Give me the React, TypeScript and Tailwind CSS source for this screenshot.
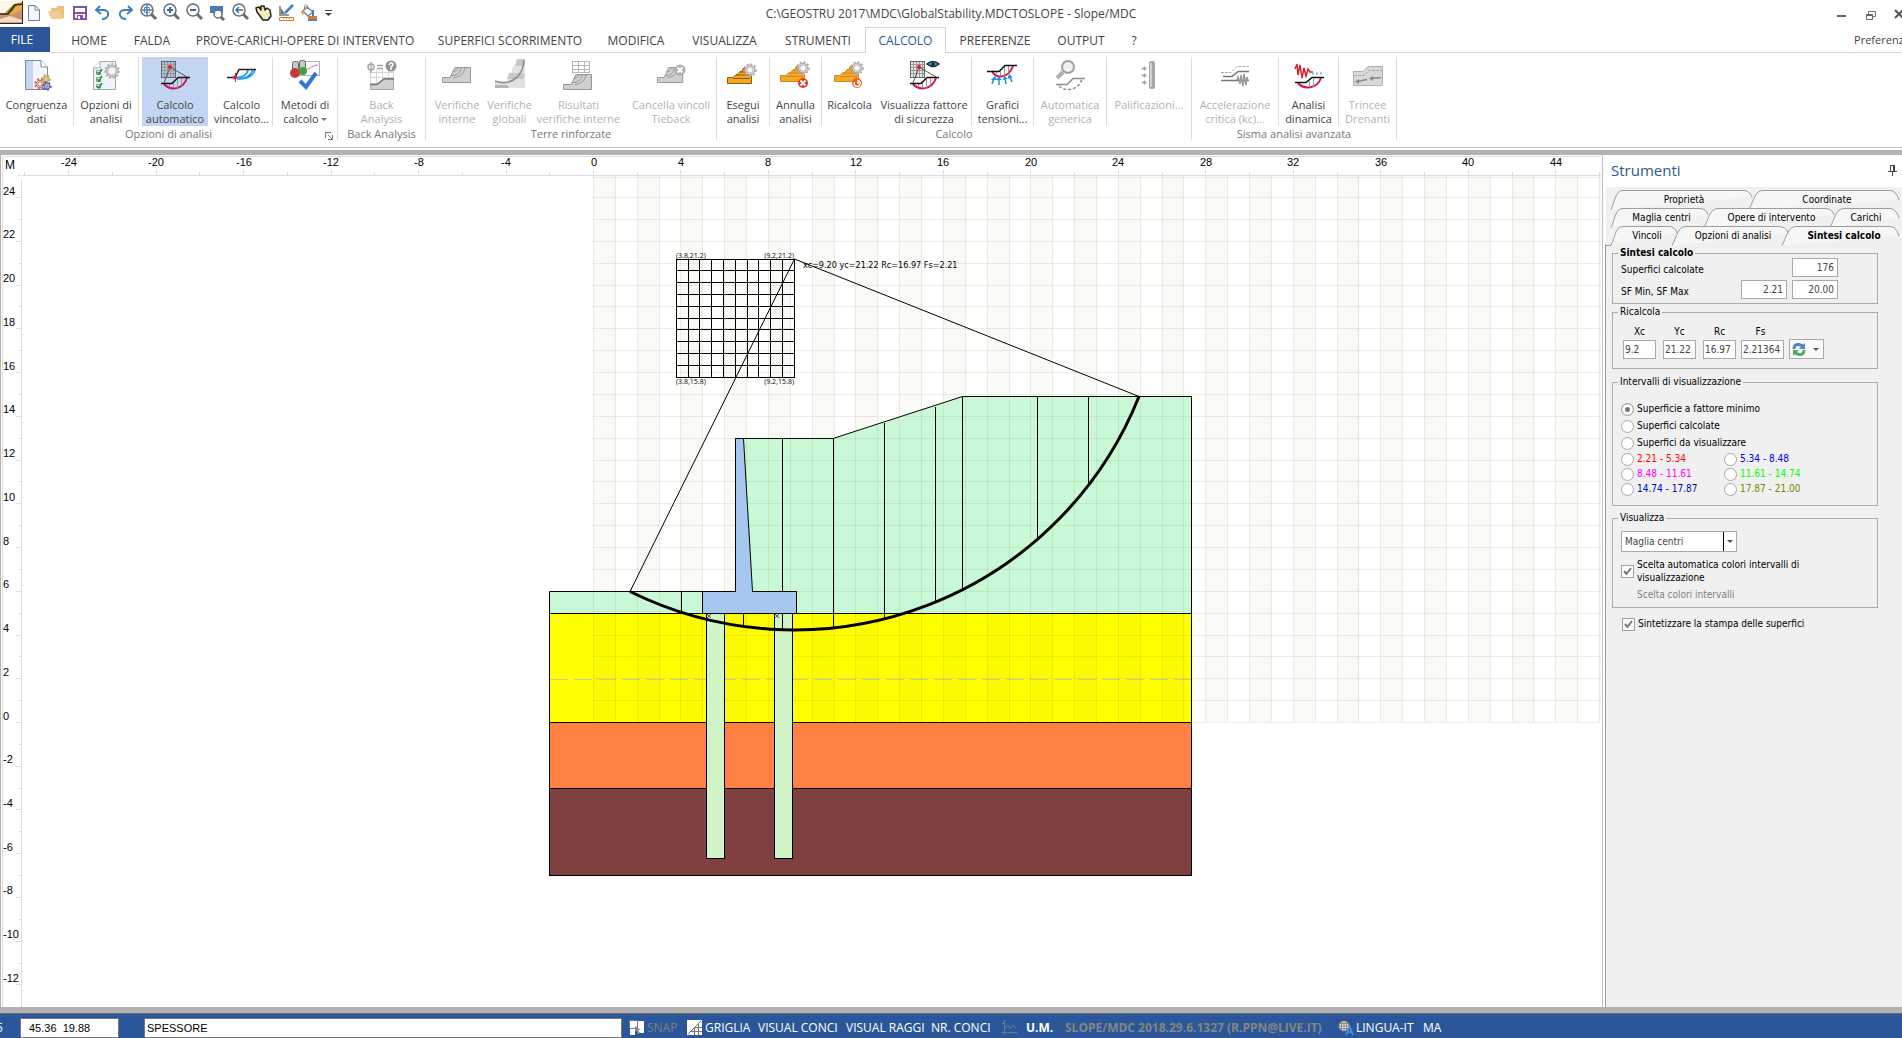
import React, { useState } from 'react';
import clsx from 'clsx';

/* ---------- ribbon icons ---------- */

const Hill = ({ x = 0, y = 0, fill = '#cfcfcf', stroke = '#969696' }) => (
  <g transform={`translate(${x} ${y})`} fill={fill} stroke={stroke}>
    <path d="M0.5 15.5V10.5H8L13 0.5H28.5V15.5Z" />
    <path d="M9 8.5C15 9 18 6 19 1M12 10.5C19 10 22 6 23 1M11 4.5C13 4.500 15 3 16 1" fill="none" />
  </g>
);

const Terraces = ({ y = 0, fill = '#f5a623', stroke = '#8a5a0a' }) => (
  <g transform={`translate(0 ${y})`} fill={fill} stroke={stroke}>
    <path d="M0.500 15.500V9.500H6L9 6.500H11L13 3.500H15L16 0.500H20L24.500 8.500V15.500Z" />
    <path d="M6 10.500H23M9 7H22M13 4H21" fill="none" />
  </g>
);

const Gear = ({ cx = 0, cy = 0, r = 5, color = '#a6a6a6' }) => (
  <g stroke={color}>
    <circle cx={cx} cy={cy} r={r + 2} fill="none" strokeWidth="1.500" strokeDasharray="2 2" />
    <circle cx={cx} cy={cy} r={r} fill="#f6f6f6" strokeWidth="2.500" />
    <circle cx={cx} cy={cy} r={r} fill="none" stroke="#d6d6d6" strokeWidth="1" />
  </g>
);

const CentreGrid = ({ bg = '#ffffff' }) => (
  <g>
    <rect x="2.500" y="2.500" width="14" height="16" fill={bg} stroke="#666" />
    <path d="M5.500 3V18M8.500 3V18M11.500 3V18M14.500 3V18M3 5.500H16M3 8.500H16M3 11.500H16M3 14.500H16" stroke="#999" />
  </g>
);

const SlipCircle = () => (
  <g fill="none">
    <path d="M5 24L11 8L28 18" stroke="#555" />
    <path d="M5 25C11 32 24 31 28 19" stroke="#d4145a" strokeWidth="2" />
    <path d="M10.500 25V28M14.500 22V29M18.500 20V29M22.500 19V27" stroke="#999" />
    <path d="M2 24.500H13L19 18.500H31" stroke="#111" strokeWidth="1.500" />
    <circle cx="11" cy="8" r="2" fill="#e8112d" />
  </g>
);

const Svg = ({ children }: { children: React.ReactNode }) => (
  <svg width="32" height="32" viewBox="0 0 32 32" className="shrink-0" aria-hidden="true">
    {children}
  </svg>
);

const icons: Record<string, React.ReactNode> = {
  check: (
    <Svg>
      <path d="M5.500 1.500H21L27.500 8V30.500H5.500Z" fill="#f2f6fc" stroke="#7c8a9c" />
      <path d="M6 2H13V30H6Z" fill="#c3d6f0" />
      <path d="M21 1.500V8H27.500" fill="#fff" stroke="#7c8a9c" />
      <Gear cx={20} cy={25} r={3} color="#c85a5a" />
      <Gear cx={26} cy={20} r={2} color="#c9a227" />
      <Gear cx={27} cy={27} r={2} color="#4a5fb5" />
    </Svg>
  ),
  options: (
    <Svg>
      <path d="M10 2.500H25.500V30.500H3.500V9Z" fill="#eff3f6" stroke="#9fa9b2" />
      <path d="M10 2.500V9H3.500" fill="#fff" stroke="#9fa9b2" />
      <path d="M6.500 11.500H10.500V15.500H6.500ZM6.500 18.500H10.500V22.500H6.500ZM6.500 25.500H10.500V28.500H6.500Z" fill="#fff" stroke="#8aa08f" />
      <path d="M7 13L9 15L12 10M7 20L9 22L12 17M7 27L9 29L12 24" fill="none" stroke="#169245" strokeWidth="1.500" />
      <Gear cx={22} cy={12} r={5} />
    </Svg>
  ),
  auto: (
    <Svg>
      <CentreGrid bg="#b0bfdc" />
      <SlipCircle />
    </Svg>
  ),
  linked: (
    <Svg>
      <path d="M10 18C16 19 21 16 22 11M11 20C20 20 25 16 27 11M15 20C24 19 28 15 29 11" fill="none" stroke="#1b9de2" strokeWidth="1.500" />
      <path d="M1 18.500H9L13 10.500H30" fill="none" stroke="#222" strokeWidth="1.500" />
      <path d="M9.500 14V23" stroke="#e8112d" />
      <circle cx="9" cy="18.500" r="2" fill="#e8112d" />
    </Svg>
  ),
  methods: (
    <Svg>
      <rect x="10.500" y="2.500" width="20" height="14" fill="#fbfbfd" stroke="#a9b0bd" />
      <path d="M18 10C22 10 23 6 29 6" fill="none" stroke="#d46a8a" />
      <rect x="3.500" y="2.500" width="6" height="9" rx="2" fill="#c8c8c8" stroke="#666" />
      <rect x="10.500" y="1.500" width="6" height="9" rx="2" fill="#c8c8c8" stroke="#666" />
      <circle cx="6" cy="14" r="5" fill="#c53a3a" />
      <circle cx="14" cy="12" r="4" fill="#3f9e47" />
      <path d="M11 22L17 28L27 14" fill="none" stroke="#2f78d6" strokeWidth="4" />
    </Svg>
  ),
  back: (
    <Svg>
      <path d="M4.500 10V30M10.500 10V30M16.500 10V30M22.500 10V30M27.500 10V30M4 13.500H28M4 18.500H28" stroke="#d5d5d5" />
      <path d="M4.500 30.500V25H11L18 19.500H27.500V30.500Z" fill="#cfcfcf" stroke="#aaa" />
      <path d="M4 25.500H11L18 20H28" fill="none" stroke="#777" strokeWidth="1.500" />
      <circle cx="5" cy="8" r="3" fill="none" stroke="#a5a5a5" strokeWidth="1.500" />
      <path d="M5 3V14M11 6.500H17M11 9.500H17" stroke="#a5a5a5" strokeWidth="1.500" />
      <circle cx="25" cy="7" r="5.500" fill="#909090" />
      <path d="M23 6Q25 2 27 5Q27 7 25 8V11" fill="none" stroke="#fff" strokeWidth="1.500" />
    </Svg>
  ),
  inner: (
    <Svg>
      <Hill x={1} y={8} />
    </Svg>
  ),
  global: (
    <Svg>
      <path d="M1 22H13L15 14H17L19 7H21L23 0H31V29H1Z" fill="#e2e2e2" />
      <path d="M15 14H30V20H13ZM23 0H31V7H21Z" fill="#c8c8c8" />
      <path d="M1 22C14 27 29 20 30 1" fill="none" stroke="#8a8a8a" strokeWidth="1.500" />
      <path d="M1 26H13L15 29H1Z" fill="#b4b4b4" />
    </Svg>
  ),
  results: (
    <Svg>
      <rect x="10.500" y="2.500" width="17" height="11" fill="#fff" stroke="#b5b5b5" />
      <path d="M10 6.500H28M10 10.500H28M16.500 2V14M22.500 2V14" stroke="#b5b5b5" />
      <Hill x={1} y={15} />
    </Svg>
  ),
  tieback: (
    <Svg>
      <g transform="translate(2 8) scale(0.900 1)">
        <Hill />
      </g>
      <circle cx="25" cy="11" r="5.500" fill="#b0b0b0" />
      <path d="M22.500 8.500L27.500 13.500M27.500 8.500L22.500 13.500" stroke="#fff" strokeWidth="2" />
    </Svg>
  ),
  run: (
    <Svg>
      <Terraces y={9} />
      <Gear cx={23} cy={11} r={4} />
    </Svg>
  ),
  cancel: (
    <Svg>
      <Terraces y={7} stroke="#d08a1a" />
      <Gear cx={23} cy={9} r={4} />
      <circle cx="23" cy="24" r="5" fill="#e03c26" />
      <path d="M20.500 21.500L25.500 26.500M25.500 21.500L20.500 26.500" stroke="#fff" strokeWidth="2" />
    </Svg>
  ),
  recalc: (
    <Svg>
      <Terraces y={7} stroke="#d08a1a" />
      <Gear cx={23} cy={9} r={4} />
      <circle cx="23" cy="24" r="5" fill="#e85a20" />
      <path d="M20.500 23A3 3 0 1 0 24 21.500V25" fill="none" stroke="#fff" strokeWidth="1.500" />
    </Svg>
  ),
  factor: (
    <Svg>
      <CentreGrid bg="#e6e6e6" />
      <SlipCircle />
      <path d="M19 5Q25 0 31 5Q25 10 19 5Z" fill="#2a9fd6" stroke="#222" strokeWidth="1.500" />
      <circle cx="25" cy="5" r="1.500" fill="#111" />
    </Svg>
  ),
  stress: (
    <Svg>
      <path d="M6 12C10 20 22 20 27 7" fill="none" stroke="#d4145a" strokeWidth="2" />
      <path d="M10.500 12V15M14.500 12V17M18.500 7V17M22.500 7V14" stroke="#999" />
      <path d="M1 12.500H13L19 6.500H31" fill="none" stroke="#111" strokeWidth="1.500" />
      <path d="M6 25L8 19M13 26V20M20 25L19 19M26 23L24 18" stroke="#1b8fd8" strokeWidth="1.500" />
      <path d="M5 21L9 17L11 21ZM10.500 21L13 17L15.500 21ZM16.500 21L18.500 17L21.500 20ZM21.500 20L23 15L26.500 18Z" fill="#1b8fd8" />
    </Svg>
  ),
  generic: (
    <Svg>
      <circle cx="14" cy="8" r="6" fill="#efefef" stroke="#a0a0a0" strokeWidth="2" />
      <path d="M9 13L3 19" stroke="#b0b0b0" strokeWidth="4" />
      <path d="M2 25.500H13L19 19.500H31" fill="none" stroke="#8a8a8a" strokeWidth="1.500" />
      <path d="M5 27C12 33 24 32 28 20" fill="none" stroke="#8a8a8a" strokeWidth="1.500" strokeDasharray="3 2" />
    </Svg>
  ),
  piles: (
    <Svg>
      <rect x="16" y="2" width="6" height="28" rx="2" fill="#a5a5a5" />
      <rect x="17" y="4" width="2" height="24" fill="#cfcfcf" />
      <path d="M9 9.500H12M9 16.500H12M9 23.500H12" stroke="#a8a8a8" strokeWidth="2" />
      <path d="M11 7L14 9.500L11 12ZM11 14L14 16.500L11 19ZM11 21L14 23.500L11 26Z" fill="#a8a8a8" />
    </Svg>
  ),
  accel: (
    <Svg>
      <path d="M2 13.500H12L18 7.500H30" fill="none" stroke="#aaa" strokeDasharray="3 1" />
      <path d="M4 17.500H13L19 12.500H30" fill="none" stroke="#777" strokeWidth="1.500" />
      <path d="M2 21.500H30" stroke="#777" strokeWidth="1.500" />
      <path d="M18 21L19 18L21 25L22 16L24 27L25 15L27 26L28 18L29 22" fill="none" stroke="#999" strokeWidth="1.500" />
    </Svg>
  ),
  dynamic: (
    <Svg>
      <path d="M2 10L4 5L5 16L7 6L9 19L11 9L13 17L15 10L17 13H20" fill="none" stroke="#e0202e" strokeWidth="1.500" />
      <path d="M19 14.500H31" stroke="#6cc0ea" strokeWidth="2" strokeDasharray="2 2" />
      <path d="M5 24C11 31 24 30 28 19" fill="none" stroke="#d4145a" strokeWidth="2" />
      <path d="M16.500 22V28M20.500 19V28" stroke="#999" />
      <path d="M2 23.500H13L19 18.500H31" fill="none" stroke="#111" strokeWidth="1.500" />
    </Svg>
  ),
  trenches: (
    <Svg>
      <path d="M1.500 26.500V12.500H11L16 7.500H30.500V26.500Z" fill="#d8d8d8" stroke="#b0b0b0" />
      <path d="M2 16.500H12L17 11.500H30" fill="none" stroke="#aaa" strokeDasharray="3 1" />
      <path d="M5 22.500L15 20.500M19 19.500L29 18.500" stroke="#888" strokeWidth="1.500" />
      <path d="M3 22.500L7 20V25ZM17 19.500L21 17V22Z" fill="#888" />
    </Svg>
  ),
};

/* ---------- quick access icons ---------- */

const Magnifier = ({ children }: { children?: React.ReactNode }) => (
  <g fill="none">
    <circle cx="9" cy="9" r="6" stroke="#6d6d6d" strokeWidth="1.500" fill="#fff" />
    <path d="M13 13L18 18" stroke="#6d6d6d" strokeWidth="3" />
    {children}
  </g>
);

const quickItems = [
  {
    label: 'Nuovo',
    art: <path d="M5.500 4.500H12L16.500 9V19.500H5.500ZM12 4.500V9H16.500" fill="#f4f8ff" stroke="#6b7fae" />,
  },
  {
    label: 'Apri',
    art: (
      <g fill="#eac282">
        <path d="M5 7H10L12 5H18V17H5Z" />
        <path d="M2 10H14L17 18H5Z" fill="#f0cd96" />
      </g>
    ),
  },
  {
    label: 'Salva',
    art: (
      <g>
        <path d="M5 6H17V18H5Z" fill="#fff" stroke="#8453a8" strokeWidth="2" />
        <path d="M5 11H17V13H5Z" fill="#8453a8" />
        <path d="M8 14H14V19H8Z" fill="#8453a8" />
        <path d="M9 15H11V18H9Z" fill="#fff" />
      </g>
    ),
  },
  {
    label: 'Annulla',
    art: <path d="M8 5L4 9L9 13M4 9H12Q17 10 16 14Q15 18 10 18" fill="none" stroke="#3f7fbf" strokeWidth="2" />,
  },
  {
    label: 'Ripeti',
    art: <path d="M13 5L17 9L12 13M17 9H9Q4 10 5 14Q6 18 11 18" fill="none" stroke="#3f7fbf" strokeWidth="2" />,
  },
  {
    label: 'Zoom tutto',
    art: (
      <Magnifier>
        <path d="M9 4V14M4 9H14" stroke="#3f7fbf" strokeWidth="1.500" />
        <path d="M6.500 6.500H11.500V11.500H6.500Z" stroke="#3f7fbf" strokeDasharray="2 1" />
      </Magnifier>
    ),
  },
  { label: 'Zoom avanti', art: <Magnifier><path d="M9 6V12M6 9H12" stroke="#2f6fb0" strokeWidth="2" /></Magnifier> },
  { label: 'Zoom indietro', art: <Magnifier><path d="M6 9H12" stroke="#2f6fb0" strokeWidth="2" /></Magnifier> },
  {
    label: 'Zoom finestra',
    art: (
      <g>
        <path d="M3 5H16V12H3Z" fill="#3f7fbf" />
        <circle cx="11" cy="13" r="4" fill="#fff" stroke="#6d6d6d" strokeWidth="1.500" />
        <path d="M14 16L17 19" stroke="#6d6d6d" strokeWidth="3" />
      </g>
    ),
  },
  {
    label: 'Zoom precedente',
    art: <Magnifier><path d="M13 9H7M9 6L6 9L9 12" stroke="#2f6fb0" strokeWidth="1.500" /></Magnifier>,
  },
  {
    label: 'Sposta',
    art: (
      <path
        d="M4 11L3 7L6 6L8 9L8 5L11 5L12 9L14 7L17 9L18 15L15 19H10Z"
        fill="#f3ecbc"
        stroke="#222"
        strokeWidth="1.500"
        strokeLinejoin="round"
      />
    ),
  },
  {
    label: 'Disegna',
    art: (
      <g>
        <path d="M4 5V14H13" fill="none" stroke="#777" strokeWidth="1.500" />
        <path d="M5 7L9 13H5Z" fill="#777" />
        <path d="M9 12L17 4" stroke="#3f7fbf" strokeWidth="2.500" />
        <path d="M3.500 16.500H17.500V19.500H3.500ZM7.500 16V18M10.500 16V18M13.500 16V18" fill="none" stroke="#e07b2a" />
      </g>
    ),
  },
  {
    label: 'Riempi',
    art: (
      <g>
        <path d="M4 10L8 6L14 11L9 15Z" fill="#fff" stroke="#888" strokeWidth="1.500" />
        <path d="M5.500 9V5Q7 2 8.500 5V8" fill="none" stroke="#888" />
        <path d="M2 10L4 15L5 10Z" fill="#e8883a" />
        <path d="M9 15H18V18H9Z" fill="#e07b2a" />
        <path d="M14 9V15" stroke="#3f7fbf" strokeWidth="2" />
        <path d="M9 18H18V20H9Z" fill="#4a86c5" />
      </g>
    ),
  },
];

/* ---------- data ---------- */

const menuTabs = [
  { label: 'HOME', w: 'w-[62px]' },
  { label: 'FALDA', w: 'w-[64px]' },
  { label: 'PROVE-CARICHI-OPERE DI INTERVENTO', w: 'w-[242px]' },
  { label: 'SUPERFICI SCORRIMENTO', w: 'w-[168px]' },
  { label: 'MODIFICA', w: 'w-[84px]' },
  { label: 'VISUALIZZA', w: 'w-[93px]' },
  { label: 'STRUMENTI', w: 'w-[94px]' },
  { label: 'CALCOLO', w: 'w-[81px]' },
  { label: 'PREFERENZE', w: 'w-[98px]' },
  { label: 'OUTPUT', w: 'w-[74px]' },
  { label: '?', w: 'w-[32px]' },
];

type RibbonItem = {
  icon: string;
  lines: string[];
  w: string;
  off?: boolean;
  active?: boolean;
  sep?: boolean;
  menu?: boolean;
};

const ribbon: { title: string; launcher?: boolean; items: RibbonItem[] }[] = [
  {
    title: 'Opzioni di analisi',
    launcher: true,
    items: [
      { icon: 'check', lines: ['Congruenza', 'dati'], w: 'w-[74px]', sep: true },
      { icon: 'options', lines: ['Opzioni di', 'analisi'], w: 'w-[65px]', sep: true },
      { icon: 'auto', lines: ['Calcolo', 'automatico'], w: 'w-[72px]', active: true },
      { icon: 'linked', lines: ['Calcolo', 'vincolato...'], w: 'w-[62px]', sep: true },
      { icon: 'methods', lines: ['Metodi di', 'calcolo'], w: 'w-[64px]', menu: true },
    ],
  },
  { title: 'Back Analysis', items: [{ icon: 'back', lines: ['Back', 'Analysis'], w: 'w-[87px]', off: true }] },
  {
    title: 'Terre rinforzate',
    items: [
      { icon: 'inner', lines: ['Verifiche', 'interne'], w: 'w-[62px]', off: true },
      { icon: 'global', lines: ['Verifiche', 'globali'], w: 'w-[43px]', off: true },
      { icon: 'results', lines: ['Risultati', 'verifiche interne'], w: 'w-[95px]', off: true },
      { icon: 'tieback', lines: ['Cancella vincoli', 'Tieback'], w: 'w-[90px]', off: true },
    ],
  },
  {
    title: 'Calcolo',
    items: [
      { icon: 'run', lines: ['Esegui', 'analisi'], w: 'w-[53px]', sep: true },
      { icon: 'cancel', lines: ['Annulla', 'analisi'], w: 'w-[52px]', sep: true },
      { icon: 'recalc', lines: ['Ricalcola'], w: 'w-[55px]' },
      { icon: 'factor', lines: ['Visualizza fattore', 'di sicurezza'], w: 'w-[95px]', sep: true },
      { icon: 'stress', lines: ['Grafici', 'tensioni...'], w: 'w-[62px]', sep: true },
      { icon: 'generic', lines: ['Automatica', 'generica'], w: 'w-[73px]', off: true, sep: true },
      { icon: 'piles', lines: ['Palificazioni...'], w: 'w-[84px]', off: true },
    ],
  },
  {
    title: 'Sisma analisi avanzata',
    items: [
      { icon: 'accel', lines: ['Accelerazione', 'critica (kc)...'], w: 'w-[87px]', off: true, sep: true },
      { icon: 'dynamic', lines: ['Analisi', 'dinamica'], w: 'w-[60px]', sep: true },
      { icon: 'trenches', lines: ['Trincee', 'Drenanti'], w: 'w-[57px]', off: true },
    ],
  },
];

const intervals = [
  { label: '2.21 - 5.34', color: 'text-[#ff0000]' },
  { label: '5.34 - 8.48', color: 'text-[#0000ff]' },
  { label: '8.48 - 11.61', color: 'text-[#ff00ff]' },
  { label: '11.61 - 14.74', color: 'text-[#00ff00]' },
  { label: '14.74 - 17.87', color: 'text-[#0000c0]' },
  { label: '17.87 - 21.00', color: 'text-[#808000]' },
];

/* ---------- top area ---------- */

const TitleBar = () => (
  <header className="relative flex h-[27px] items-center justify-center">
    <div className="absolute left-0 top-0 flex h-6 items-center">
      <svg width="23" height="23" viewBox="0 0 23 23" aria-hidden="true">
        <rect width="23" height="23" fill="#fdf6e6" />
        <path d="M0 14L8 11L14 3L22 1V14L10 20L0 22Z" fill="#e8b040" />
        <path d="M5 12L14 3L17 3L12 11Z" fill="#6f9a3a" />
        <path d="M0 13L9 12L12 14L22 8V22H0Z" fill="#c9926a" />
        <path d="M0 18L10 15L22 19V22H0Z" fill="#f1dcc6" />
        <path d="M0 13H8L15 4L23 3M0 22.500H23" stroke="#3a2413" fill="none" strokeWidth="1.500" />
        <path d="M22.500 0V23" stroke="#3a2413" />
      </svg>
      {quickItems.map((item) => (
        <button key={item.label} type="button" aria-label={item.label} className="h-[22px] w-[23px]">
          <svg width="23" height="22" viewBox="0 0 23 22" aria-hidden="true">
            {item.art}
          </svg>
        </button>
      ))}
      <button type="button" aria-label="Personalizza" className="h-[22px] w-3">
        <svg width="12" height="22" viewBox="0 0 12 22" aria-hidden="true">
          <path d="M3 9.500H10" stroke="#444" />
          <path d="M3 12H10L6.500 15Z" fill="#444" />
        </svg>
      </button>
    </div>
    <h1 className="text-[12px] leading-4 text-[#444]">
      C:\GEOSTRU 2017\MDC\GlobalStability.MDCTOSLOPE - Slope/MDC
    </h1>
    <div className="absolute -right-1 top-2 flex gap-[18px]">
      <button type="button" aria-label="Riduci" className="size-3">
        <svg width="12" height="12" aria-hidden="true">
          <path d="M3 8H12" stroke="#666" strokeWidth="2" />
        </svg>
      </button>
      <button type="button" aria-label="Ripristina" className="size-3">
        <svg width="12" height="12" aria-hidden="true">
          <path d="M4.500 6V3.500H11.500V8.500H9" fill="none" stroke="#777" />
          <path d="M2.500 6.500H8.500V11.500H2.500ZM2 7.500H9" fill="none" stroke="#666" />
        </svg>
      </button>
      <button type="button" aria-label="Chiudi" className="size-3">
        <svg width="12" height="12" aria-hidden="true">
          <path d="M1 2L9 10M9 2L1 10" stroke="#555" strokeWidth="2" />
        </svg>
      </button>
    </div>
  </header>
);

const MenuBar = () => (
  <nav className="flex h-[26px] text-[12px] leading-4 text-[#444]">
    <button type="button" className="h-[25px] w-[50px] bg-[#2b579a] pr-[6px] text-white">
      FILE
    </button>
    <div className="w-2 border-b border-[#d4d4d4]" />
    {menuTabs.map((tab) => (
      <button
        key={tab.label}
        type="button"
        className={clsx(
          'shrink-0 whitespace-nowrap border-[#d4d4d4]',
          tab.w,
          tab.label === 'CALCOLO' ? 'border-x border-t pt-px text-[#2b579a]' : 'border-b pt-[3px]'
        )}
      >
        {tab.label}
      </button>
    ))}
    <div className="flex flex-1 items-center justify-end overflow-hidden border-b border-[#d4d4d4]">
      <button type="button" className="-mr-2 text-[11px]">
        Preferenze
      </button>
    </div>
  </nav>
);

const RibbonButton = ({ item }: { item: RibbonItem }) => (
  <div className={clsx('flex h-[69px] shrink-0 justify-center', item.w, item.sep && 'border-r border-[#dcdcdc]')}>
    <button
      type="button"
      disabled={item.off}
      className={clsx(
        'flex h-full flex-col items-center whitespace-nowrap pt-[2px] text-[11px] leading-[14px]',
        item.active && 'w-[66px] bg-[#c2d5f2]',
        item.off ? 'text-[#b1b1b1]' : 'text-[#444]'
      )}
    >
      {icons[item.icon]}
      <span className="mt-[7px]">{item.lines[0]}</span>
      <span className="flex items-center">
        {item.lines[1]}
        {item.menu && <span className="ml-[2px] border-x-[3px] border-t-[3px] border-x-transparent border-t-[#777]" />}
      </span>
    </button>
  </div>
);

const Ribbon = () => (
  <section className="flex h-[95px] border-b border-[#c8c8c8] pt-1">
    {ribbon.map((group) => (
      <div key={group.title} className="relative flex h-[83px] flex-col border-r border-[#dcdcdc]">
        <div className="flex">
          {group.items.map((item) => (
            <RibbonButton key={item.icon} item={item} />
          ))}
        </div>
        <div className="text-center text-[11px] leading-[15px] text-[#777]">{group.title}</div>
        {group.launcher && (
          <button type="button" aria-label="Altre opzioni" className="absolute bottom-0 right-1 size-2">
            <svg width="8" height="8" aria-hidden="true">
              <path d="M0.500 6V0.500H6M3 3L7 7M7.500 3V7.500H3" fill="none" stroke="#777" />
            </svg>
          </button>
        )}
      </div>
    ))}
  </section>
);

/* ---------- drawing ---------- */

const SCALE = 21.87;
const px = (x: number) => 593.5 + x * SCALE;
const py = (y: number) => 567.5 - y * SCALE;
// snapped to the middle of a device pixel so that thin lines stay sharp
const sx = (x: number) => Math.floor(px(x)) + 0.5;
const sy = (y: number) => Math.floor(py(y)) + 0.5;

const range = (from: number, to: number, step = 1) => {
  const out: number[] = [];
  for (let v = from; v <= to; v += step) out.push(v);
  return out;
};

const meshX = [676, 688, 699, 711, 723, 735, 747, 758, 770, 782, 794];
const meshY = [104, 115, 127, 139, 151, 163, 174, 186, 198, 210, 222];

// vertical slices of the sliding mass: x, top, bottom
const slices = [
  [681, 436, 457],
  [743, 458, 472],
  [782, 283, 436],
  [782, 458, 475],
  [833, 283, 473],
  [884, 268, 463],
  [935, 252, 447],
  [962, 242, 435],
  [1037, 242, 384],
  [1088, 242, 330],
];

const Drawing = () => (
  <svg className="block h-full w-full" role="img" aria-label="Sezione del pendio" fontFamily="'Liberation Sans', Arial, sans-serif">
    <defs>
      <clipPath id="sheet">
        <rect x="22" y="21" width="1579" height="832" />
      </clipPath>
    </defs>

    <g clipPath="url(#sheet)" fill="#f9f9f5">
      {range(0, 46, 2).map((x) => (
        <rect key={x} x={sx(x)} y="21" width="22" height="546" />
      ))}
    </g>

    {/* soil layers */}
    <g stroke="#000">
      <path
        d={`M${sx(-2)} ${sy(5)}V${sy(6)}H735.5V283.500H${px(10.95)}L962.500 241.500H1191.500V${sy(5)}Z`}
        fill="#c9f8d6"
      />
      <rect x={sx(-2)} y="458.500" width="642" height="109" fill="#ffff00" />
      <rect x={sx(-2)} y="567.500" width="642" height="66" fill="#ff8040" />
      <rect x={sx(-2)} y="633.500" width="642" height="87" fill="#804040" />
    </g>
    <g fill="#fafa00">
      {range(0, 26, 2).map((x) => (
        <rect key={x} x={sx(x)} y="459" width="22" height="108" />
      ))}
    </g>
    <path d="M550 524.500H1191" stroke="#c8c8b4" strokeDasharray="18 6" />

    {/* background grid */}
    <g clipPath="url(#sheet)" stroke="rgba(100,90,0,0.100)">
      {range(0, 46).map((x) => (
        <path key={x} d={`M${sx(x)} 21V567`} />
      ))}
      {range(0, 24).map((y) => (
        <path key={y} d={`M593 ${sy(y)}H1601`} />
      ))}
      <path d="M593 22.500H1601" />
    </g>

    {/* piles, slices, wall */}
    <g stroke="#000" fill="#d0f4c6">
      <rect x="706.500" y="458.500" width="18" height="245" />
      <rect x="774.500" y="458.500" width="18" height="245" />
    </g>
    <path d="M707 459L711 463M707 463L711 459M775 459L779 463M775 463L779 459" stroke="#555" />
    {slices.map(([x, top, bottom], i) => (
      <path key={i} d={`M${x + 0.5} ${top}V${bottom}`} stroke="#000" />
    ))}
    <path d="M735.500 283.500H743.500L752.500 436.500H796.500V458.500H702.500V436.500H735.500Z" fill="#a6c8f0" stroke="#000" />

    {/* critical surface with its two radii */}
    <path d="M630 436.500L794.500 104L1139 241.500" fill="none" stroke="#000" />
    <path d="M630 436.500A371 371 0 0 0 1139 241.500" fill="none" stroke="#000" strokeWidth="3" />

    {/* mesh of centres */}
    <g stroke="#000">
      {meshX.map((x) => (
        <path key={x} d={`M${x + 0.5} 104V223`} />
      ))}
      {meshY.map((y) => (
        <path key={y} d={`M676 ${y + 0.5}H795`} />
      ))}
    </g>
    <g fontFamily="'Noto Sans', 'Open Sans', sans-serif" fontSize="7" fill="#222">
      <text x="676" y="103">(3.8,21.2)</text>
      <text x="794" y="103" textAnchor="end">(9.2,21.2)</text>
      <text x="676" y="229">(3.8,15.8)</text>
      <text x="794" y="229" textAnchor="end">(9.2,15.8)</text>
    </g>
    <text x="803" y="113" fontFamily="'DejaVu Sans Condensed', 'Noto Sans', sans-serif" fontSize="9">
      xc=9.20 yc=21.22 Rc=16.97 Fs=2.21
    </text>

    {/* rulers */}
    <g stroke="#dedede">
      <path d="M2.500 853V1.500H1601M22 20.500H1601M21.500 24V853" fill="none" />
      {range(-26, 46, 2).map((x) => (
        <path key={x} d={`M${sx(x)} ${x % 4 === 0 ? 15 : 17}V21`} />
      ))}
      {range(-12, 25).map((y) => (
        <path key={y} d={`M${y % 2 === 0 ? 16 : 18} ${sy(y)}H21`} />
      ))}
    </g>
    <g fontSize="11">
      <text x="5" y="14" fontSize="12">M</text>
      {range(-24, 44, 4).map((x) => (
        <text key={x} x={Math.round(px(x))} y="11" textAnchor="middle">
          {x}
        </text>
      ))}
      {range(-12, 24, 2).map((y) => (
        <text key={y} x="3" y={Math.round(py(y)) - 3}>
          {y}
        </text>
      ))}
    </g>
  </svg>
);

/* ---------- side panel ---------- */

const field = 'h-[19px] min-w-0 border border-[#a9a9a9] bg-white text-[10px] leading-none text-[#444]';
const box = 'mr-[24px] ml-[5px] border border-[#ababab] px-[8px]';
const legend = 'px-[2px] leading-[14px] -ml-[3px]';
const radio =
  'size-[13px] shrink-0 appearance-none rounded-full border border-[#a6a6a6] bg-white checked:shadow-[inset_0_0_0_3px_white] checked:bg-[#777]';

const TabRow = ({ path, children }: { path: string; children: React.ReactNode }) => (
  <div className="relative flex h-[18px]">
    <svg className="absolute left-0 top-0 h-5 w-full" aria-hidden="true">
      <path d={path} fill="#f6f6f6" stroke="#9c9c9c" />
    </svg>
    {children}
  </div>
);

const PanelTab = ({ w, bold, children }: { w: string; bold?: boolean; children: React.ReactNode }) => (
  <button
    type="button"
    className={clsx('relative shrink-0 whitespace-nowrap pt-px leading-[18px]', w, bold && 'font-bold')}
  >
    {children}
  </button>
);

const Check = ({ id }: { id: string }) => {
  const [on, setOn] = useState(true);
  return (
    <span className="relative size-[13px] shrink-0">
      <input
        id={id}
        type="checkbox"
        checked={on}
        onChange={() => setOn(!on)}
        className="block size-[13px] appearance-none border border-[#a0a0a0] bg-white"
      />
      {on && (
        <svg className="pointer-events-none absolute left-0 top-0" width="13" height="13" aria-hidden="true">
          <path d="M3 6L5.500 9L10 3" fill="none" stroke="#777" strokeWidth="2" />
        </svg>
      )}
    </span>
  );
};

const ToolsPanel = () => {
  const [view, setView] = useState('min');

  const renderRadio = (value: string, label: string, color = 'text-black') => (
    <label key={value} className={clsx('flex items-center gap-[3px] whitespace-nowrap', color)}>
      <input type="radio" name="view" checked={view === value} onChange={() => setView(value)} className={radio} />
      {label}
    </label>
  );

  return (
    <aside className="flex w-[300px] shrink-0 flex-col overflow-hidden border-l border-[#c0c0c0] bg-white pl-[3px]">
      <div className="flex h-8 items-center justify-between pb-[2px] pl-[5px] pr-[4px]">
        <h2 className="text-[15px] leading-5 text-[#2b579a]">Strumenti</h2>
        <button type="button" aria-label="Blocca" className="size-3">
          <svg width="12" height="12" aria-hidden="true">
            <path d="M4.500 1V7M7.500 1V7M4 1.500H9M8.500 1V7M2 7.500H11M6.500 8V12" fill="none" stroke="#444" />
          </svg>
        </button>
      </div>
      <div className="flex flex-1 flex-col bg-[#f0f0f0] pt-[3px] text-[10px] leading-[14px] font-['DejaVu_Sans_Condensed','Noto_Sans',sans-serif]">
        <TabRow path="M5 19.500C9 12 9 .5 17 .5H138Q143 .5 146 7M143 19.500C148 10 149 .5 157 .5H284Q290 .5 293 10">
          <PanelTab w="w-[156px]">Proprietà</PanelTab>
          <PanelTab w="w-[130px]">Coordinate</PanelTab>
        </TabRow>
        <TabRow path="M5 19.500C9 12 9 .5 17 .5H94Q100 .5 102 7M98 19.500C103 10 104 .5 112 .5H219Q226 .5 228 7M224 19.500C229 10 230 .5 238 .5H284Q290 .5 293 10">
          <PanelTab w="w-[111px]">Maglia centri</PanelTab>
          <PanelTab w="w-[109px]">Opere di intervento</PanelTab>
          <PanelTab w="w-[80px]">Carichi</PanelTab>
        </TabRow>
        <TabRow path="M0 19.500H5C9 12 9 .5 17 .5H63Q69 .5 71 7M66 19.500C71 10 72 .5 80 .5H172Q180 .5 182 7M176 19.500C181 10 182 .5 190 .5H284Q290 .5 293 10">
          <PanelTab w="w-[82px]">Vincoli</PanelTab>
          <PanelTab w="w-[90px]">Opzioni di analisi</PanelTab>
          <PanelTab w="w-[132px]" bold>Sintesi calcolo</PanelTab>
        </TabRow>
        <div className="-ml-px flex flex-1 flex-col border-l border-[#9c9c9c] pb-6 pl-px">
          <fieldset className={clsx(box, 'mt-[2px] h-[58px]')}>
            <legend className={clsx(legend, 'font-bold')}>Sintesi calcolo</legend>
            <div className="-mt-1 flex h-[22px] items-center justify-between pr-[31px]">
              <label htmlFor="count" className="pt-[6px]">Superfici calcolate</label>
              <input id="count" defaultValue="176" className={clsx(field, 'w-[46px] px-[3px] text-right')} />
            </div>
            <div className="flex h-[22px] items-center pr-[31px]">
              <label htmlFor="sfmin" className="flex-1 pt-[6px]">SF Min, SF Max</label>
              <input id="sfmin" defaultValue="2.21" className={clsx(field, 'mr-[5px] w-[46px] px-[3px] text-right')} />
              <input aria-label="SF Max" defaultValue="20.00" className={clsx(field, 'w-[46px] px-[3px] text-right')} />
            </div>
          </fieldset>

          <fieldset className={clsx(box, 'mt-[1px] h-[64px]')}>
            <legend className={legend}>Ricalcola</legend>
            <div className="ml-[2px] mt-[6px] flex items-end">
              <label className="mr-[7px] flex w-[33px] flex-col items-center gap-[1px]">
                Xc
                <input defaultValue="9.2" className={clsx(field, 'w-full px-px')} />
              </label>
              <label className="mr-[7px] flex w-[33px] flex-col items-center gap-[1px]">
                Yc
                <input defaultValue="21.22" className={clsx(field, 'w-full px-px')} />
              </label>
              <label className="mr-[5px] flex w-[33px] flex-col items-center gap-[1px]">
                Rc
                <input defaultValue="16.97" className={clsx(field, 'w-full px-px')} />
              </label>
              <label className="mr-[5px] flex w-[43px] flex-col items-center gap-[1px]">
                <span className="pr-1">Fs</span>
                <input defaultValue="2.21364" className={clsx(field, 'w-full px-px')} />
              </label>
              <button
                type="button"
                aria-label="Ricalcola"
                className="flex h-5 w-[35px] items-center gap-[7px] border border-[#a9a9a9] bg-[#fafafa] pl-[2px]"
              >
                <svg width="14" height="15" viewBox="0 0 14 15" className="shrink-0" aria-hidden="true">
                  <path d="M2 7Q2 2 7 2.500L11 4" fill="none" stroke="#4a86bd" strokeWidth="3" />
                  <path d="M13 1V7H7Z" fill="#4a86bd" />
                  <path d="M12 8Q12 13 7 12.500L3 11" fill="none" stroke="#5aa765" strokeWidth="3" />
                  <path d="M1 14V8H7Z" fill="#5aa765" />
                </svg>
                <span className="border-x-[3px] border-t-[3px] border-x-transparent border-t-[#555]" />
              </button>
            </div>
          </fieldset>

          <fieldset className={clsx(box, 'mt-[6px] h-[131px]')}>
            <legend className={legend}>Intervalli di visualizzazione</legend>
            <div className="mt-[13px] flex flex-col items-start gap-[3px]">
              {renderRadio('min', 'Superficie a fattore minimo')}
              {renderRadio('all', 'Superfici calcolate')}
              {renderRadio('some', 'Superfici da visualizzare')}
            </div>
            <div className="mt-[2px] grid grid-cols-[103px_1fr] gap-y-px">
              {intervals.map((item) => renderRadio(item.label, item.label, item.color))}
            </div>
          </fieldset>

          <fieldset className={clsx(box, 'mt-[5px] h-[97px]')}>
            <legend className={legend}>Visualizza</legend>
            <div className="relative mt-[6px] w-[116px]">
              <select aria-label="Visualizza" className="h-[21px] w-full appearance-none border border-[#a9a9a9] bg-white pl-[3px] text-[10px] leading-none text-[#444]">
                <option>Maglia centri</option>
              </select>
              <span className="pointer-events-none absolute bottom-px right-[13px] top-px w-px bg-black" />
              <span className="pointer-events-none absolute right-1 top-[9px] border-x-[3px] border-t-[3px] border-x-transparent border-t-[#555]" />
            </div>
            <div className="mt-[6px] flex items-center gap-[3px]">
              <Check id="auto-colours" />
              <label htmlFor="auto-colours" className="w-[190px] leading-[13px]">
                Scelta automatica colori intervalli di visualizzazione
              </label>
            </div>
            <button type="button" className="ml-4 mt-[4px] block text-[#808080]">
              Scelta colori intervalli
            </button>
          </fieldset>

          <div className="ml-[15px] mt-[9px] flex items-center gap-[3px]">
            <Check id="print" />
            <label htmlFor="print">Sintetizzare la stampa delle superfici</label>
          </div>
        </div>
      </div>
    </aside>
  );
};

/* ---------- status bar ---------- */

const StatusBar = () => (
  <footer className="flex h-[25px] items-center border-t border-[#6e6e6e] bg-[#2b579a] pt-[3px] text-[12px] leading-4 text-white">
    <span className="-ml-1 w-5">5</span>
    <input
      aria-label="Coordinate"
      defaultValue="45.36  19.88"
      className="ml-1 h-[20px] w-[99px] border border-[#777] bg-white pl-2 text-[11px] text-black font-['Liberation_Sans',Arial,sans-serif]"
    />
    <input
      aria-label="Comando"
      defaultValue="SPESSORE"
      className="ml-[25px] h-[20px] w-[478px] border border-[#777] bg-white px-[2px] text-[11px] text-black font-['Liberation_Sans',Arial,sans-serif]"
    />
    <button type="button" className="ml-[7px] flex w-[58px] items-center gap-[3px] text-[#7f7f7f]">
      <svg width="15" height="15" className="shrink-0" aria-hidden="true">
        <path d="M1 1H8V8H1ZM9 1H15V13H9ZM1 9H6V15H1Z" fill="#fff" />
        <path d="M.5 .5H8.500V8.500H.5Z" fill="none" stroke="#9a9a9a" strokeDasharray="1 1" />
        <path d="M6 6V12L8 11L9 14L11 13L9 10H12Z" fill="#8a8a8a" />
      </svg>
      SNAP
    </button>
    <button type="button" className="flex w-[71px] items-center gap-[3px]">
      <svg width="15" height="15" className="shrink-0" aria-hidden="true">
        <rect width="15" height="15" fill="#fff" />
        <path d="M1 14L14 1M11.500 3V15M7.500 8V15M8 7.500H15M4 11.500H15" stroke="#777" />
      </svg>
      GRIGLIA
    </button>
    <button type="button" className="w-[88px] text-left">VISUAL CONCI</button>
    <button type="button" className="w-[85px] text-left">VISUAL RAGGI</button>
    <button type="button" className="w-[70px] text-left">NR. CONCI</button>
    <svg width="16" height="15" className="mr-[9px] shrink-0" aria-hidden="true">
      <path d="M3.500 0V15M0 12.500H16M1 3.500H3M3 10L7 5L9 9L12 5L15 8" fill="none" stroke="#687c98" />
    </svg>
    <button type="button" className="w-[39px] text-left font-bold">U.M.</button>
    <span className="w-[273px] whitespace-nowrap font-bold text-[#858585]">
      SLOPE/MDC 2018.29.6.1327 (R.PPN@LIVE.IT)
    </span>
    <button type="button" className="flex w-[85px] items-center gap-[2px] whitespace-nowrap">
      <svg width="16" height="16" className="shrink-0" aria-hidden="true">
        <circle cx="6" cy="6" r="5" fill="#eee" stroke="#888" />
        <path d="M1 6H11M6 1V11M2 3.500H10M2 8.500H10M3.500 2V10M8.500 2V10" stroke="#888" />
        <path d="M8 15L11.500 6L15 15M9 12H14" fill="none" stroke="#4d92d8" strokeWidth="1.500" />
      </svg>
      LINGUA-IT
    </button>
    <button type="button">MA</button>
  </footer>
);

const App = () => (
  <div className="flex h-screen flex-col overflow-hidden bg-white font-['Open_Sans','Noto_Sans',sans-serif]">
    <TitleBar />
    <MenuBar />
    <Ribbon />
    <div className="mt-[2px] h-[5px] shrink-0 bg-[#b2b2b2]" />
    <div className="flex min-h-0 flex-1 border-l border-[#b2b2b2]">
      <main className="-ml-px min-w-0 flex-1">
        <Drawing />
      </main>
      <ToolsPanel />
    </div>
    <div className="h-[6px] shrink-0 bg-[#b2b2b2]" />
    <StatusBar />
  </div>
);

export default App;
